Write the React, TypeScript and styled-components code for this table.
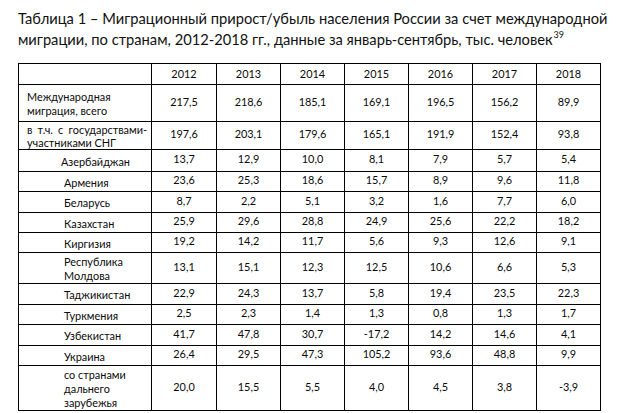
import React from 'react';
import styled, { createGlobalStyle } from 'styled-components';

const GlobalStyle = createGlobalStyle`
  html, body { margin: 0; padding: 0; background: #ffffff; }
  body { font-family: Lato, "Liberation Sans", sans-serif; color: #111; }
`;

const Page = styled.div`
  width: 620px;
  height: 413px;
  box-sizing: border-box;
  padding: 8px 0 0 18px;
  display: flex;
  flex-direction: column;
  overflow: hidden;
`;

const Title = styled.h1`
  margin: 0;
  font-family: Lato, "Liberation Sans", sans-serif;
  font-weight: 400;
  font-size: 14.7px;
  line-height: 21px;
  color: #111;
  white-space: nowrap;
`;

const TitleLine = styled.span`
  display: block;
`;

const Sup = styled.sup`
  font-size: 9px;
  line-height: 0;
  vertical-align: 7px;
  margin-left: 1px;
`;

const Table = styled.table`
  margin-top: 13px;
  border-collapse: collapse;
  table-layout: fixed;
  width: 582px;
  font-family: Lato, "Liberation Sans", sans-serif;
  font-size: 10.9px;
  color: #0a0a0a;
`;

const Row = styled.tr<{ $h: number }>`
  height: ${(p) => p.$h}px;
`;

const Cell = styled.td`
  border: 1px solid #000;
  padding: 0;
  box-sizing: border-box;
  line-height: 14px;
`;

const YearCell = styled(Cell)`
  text-align: center;
  vertical-align: middle;
`;

const NumCell = styled(Cell)`
  text-align: center;
  vertical-align: middle;
  padding-bottom: 3px;
`;

const NameCell = styled(Cell)<{ $indent: number; $lh?: number }>`
  text-align: left;
  vertical-align: middle;
  padding: 2px 4px 0 ${(p) => p.$indent}px;
  line-height: ${(p) => p.$lh ?? 14}px;
`;

const JustifiedLine = styled.span`
  display: block;
  text-align: justify;
  text-align-last: justify;
`;

const Line = styled.span`
  display: block;
`;

type RowData = {
  lines: string[];
  indent: number;
  h: number;
  lh?: number;
  justifyFirst?: boolean;
  values: string[];
};

const years = ['2012', '2013', '2014', '2015', '2016', '2017', '2018'];
const colWidths = [133, 65, 64, 64, 64, 64, 64, 64];

const rows: RowData[] = [
  { lines: ['Международная', 'миграция, всего'], indent: 8, h: 37, values: ['217,5', '218,6', '185,1', '169,1', '196,5', '156,2', '89,9'] },
  { lines: ['в т.ч. с государствами-', 'участниками СНГ'], indent: 8, h: 23, lh: 12.5, justifyFirst: true, values: ['197,6', '203,1', '179,6', '165,1', '191,9', '152,4', '93,8'] },
  { lines: ['Азербайджан'], indent: 42, h: 22, values: ['13,7', '12,9', '10,0', '8,1', '7,9', '5,7', '5,4'] },
  { lines: ['Армения'], indent: 45, h: 20, values: ['23,6', '25,3', '18,6', '15,7', '8,9', '9,6', '11,8'] },
  { lines: ['Беларусь'], indent: 45, h: 21, values: ['8,7', '2,2', '5,1', '3,2', '1,6', '7,7', '6,0'] },
  { lines: ['Казахстан'], indent: 45, h: 20, values: ['25,9', '29,6', '28,8', '24,9', '25,6', '22,2', '18,2'] },
  { lines: ['Киргизия'], indent: 45, h: 20, values: ['19,2', '14,2', '11,7', '5,6', '9,3', '12,6', '9,1'] },
  { lines: ['Республика', 'Молдова'], indent: 45, h: 30, values: ['13,1', '15,1', '12,3', '12,5', '10,6', '6,6', '5,3'] },
  { lines: ['Таджикистан'], indent: 45, h: 21, values: ['22,9', '24,3', '13,7', '5,8', '19,4', '23,5', '22,3'] },
  { lines: ['Туркмения'], indent: 45, h: 20, values: ['2,5', '2,3', '1,4', '1,3', '0,8', '1,3', '1,7'] },
  { lines: ['Узбекистан'], indent: 45, h: 21, values: ['41,7', '47,8', '30,7', '-17,2', '14,2', '14,6', '4,1'] },
  { lines: ['Украина'], indent: 45, h: 20, values: ['26,4', '29,5', '47,3', '105,2', '93,6', '48,8', '9,9'] },
  { lines: ['со странами', 'дальнего', 'зарубежья'], indent: 45, h: 44, values: ['20,0', '15,5', '5,5', '4,0', '4,5', '3,8', '-3,9'] },
];

export default function App() {
  return (
    <>
      <GlobalStyle />
      <Page>
        <Title>
          <TitleLine>Таблица 1 – Миграционный прирост/убыль населения России за счет международной</TitleLine>
          <TitleLine>
            миграции, по странам, 2012-2018 гг., данные за январь-сентябрь, тыс. человек<Sup>39</Sup>
          </TitleLine>
        </Title>
        <Table>
          <colgroup>
            {colWidths.map((w, i) => (
              <col key={i} style={{ width: w }} />
            ))}
          </colgroup>
          <tbody>
            <Row $h={21}>
              <YearCell />
              {years.map((y) => (
                <YearCell key={y}>{y}</YearCell>
              ))}
            </Row>
            {rows.map((r, i) => (
              <Row key={i} $h={r.h}>
                <NameCell $indent={r.indent} $lh={r.lh}>
                  {r.lines.map((l, j) =>
                    j === 0 && r.justifyFirst ? (
                      <JustifiedLine key={j}>{l}</JustifiedLine>
                    ) : (
                      <Line key={j}>{l}</Line>
                    )
                  )}
                </NameCell>
                {r.values.map((v, j) => (
                  <NumCell key={j}>{v}</NumCell>
                ))}
              </Row>
            ))}
          </tbody>
        </Table>
      </Page>
    </>
  );
}
